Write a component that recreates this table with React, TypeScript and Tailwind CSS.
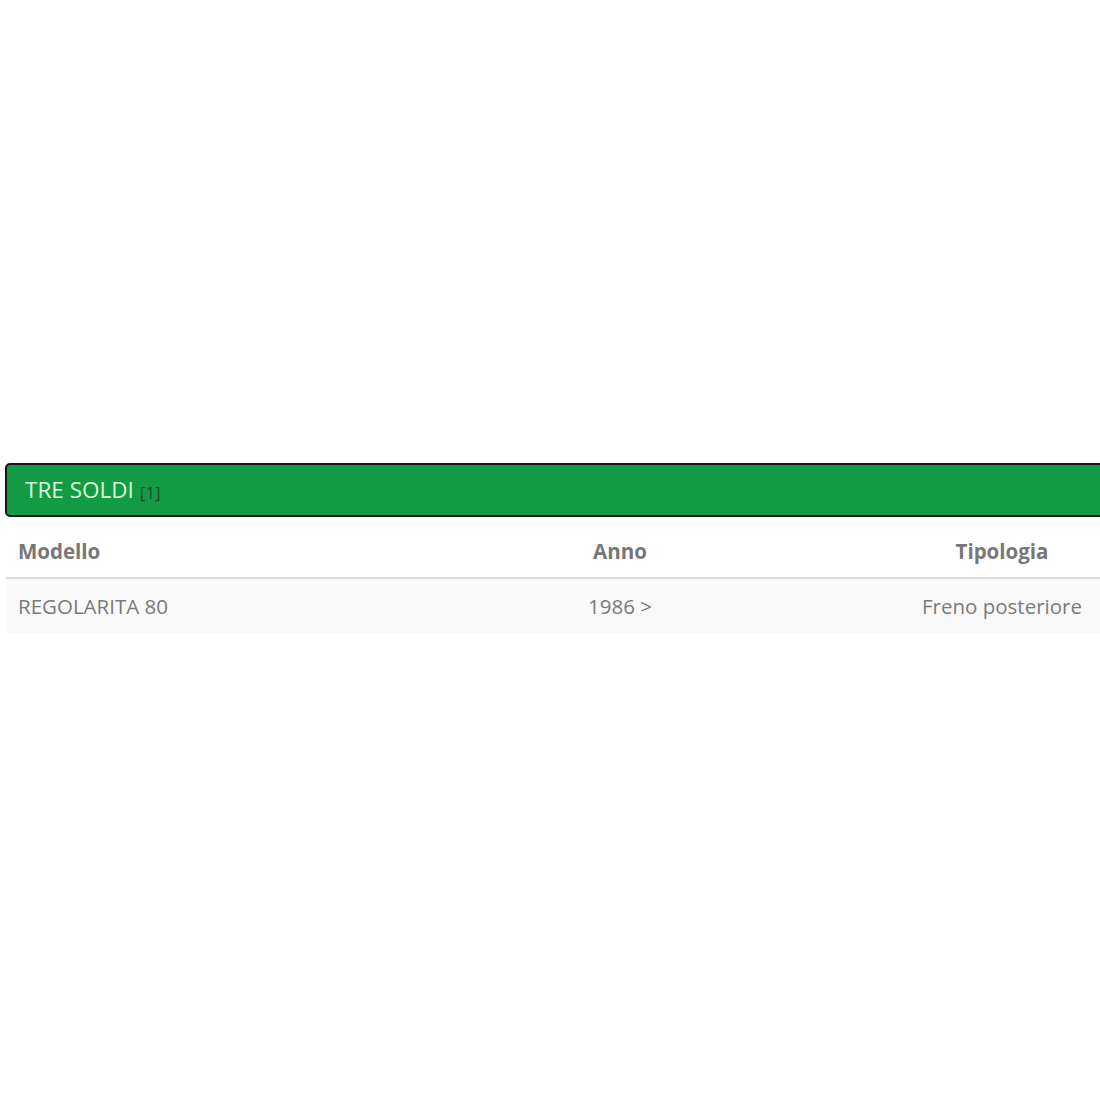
export default function App() {
  const rows = [
    { modello: "REGOLARITA 80", anno: "1986 >", tipologia: "Freno posteriore" },
  ];
  return (
    <main
      className="min-h-[1100px] w-[1100px] overflow-hidden bg-white pt-[463px]"
      style={{ fontFamily: '"Open Sans", "Liberation Sans", sans-serif' }}
    >
      <div className="w-[1160px] pl-[5px]">
        {/* Brand bar */}
        <div className="flex h-[54px] items-center rounded-[5px] border-2 border-[#161616] bg-[#139a45] pl-[18px]">
          <span className="text-[22.5px] text-[#dcffdc]">TRE SOLDI</span>
          <span className="ml-[6px] mt-[5px] text-[17px] text-[#1d4f2d]">[1]</span>
        </div>

        {/* Models table */}
        <div className="ml-px mt-[2px] text-[20.5px] text-[#7a7a7a]">
          <div className="grid h-[60px] grid-cols-[390px_448px_316px] items-center border-b-2 border-[#dcdcdc] pt-[6px] font-bold text-[#777]">
            <div className="pl-[12px]">Modello</div>
            <div className="text-center">Anno</div>
            <div className="text-center">Tipologia</div>
          </div>
          {rows.map((r) => (
            <div
              key={r.modello}
              className="grid h-[54px] grid-cols-[390px_448px_316px] items-center bg-[#f9f9f9]"
            >
              <div className="pl-[12px]">{r.modello}</div>
              <div className="text-center">{r.anno}</div>
              <div className="text-center">{r.tipologia}</div>
            </div>
          ))}
        </div>
      </div>
    </main>
  );
}
